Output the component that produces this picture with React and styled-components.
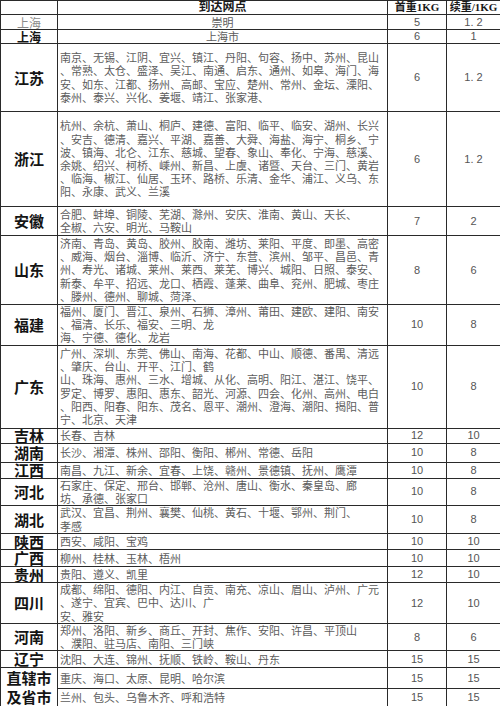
import React from 'react';
import styled, { createGlobalStyle } from 'styled-components';

const GlobalStyle = createGlobalStyle`
  html, body {
    margin: 0;
    padding: 0;
    background: #ffffff;
  }
  body {
    font-family: "Liberation Serif", "Noto Sans CJK SC", serif;
  }
`;

const Sheet = styled.table`
  width: 500px;
  table-layout: fixed;
  border-collapse: collapse;
  border-bottom: 2px solid #111;
`;

const Row = styled.tr`
  height: ${(p) => p.$h}px;
`;

const Cell = styled.td`
  border: 1px solid #2a2a2a;
  padding: 0;
  vertical-align: middle;
  overflow: hidden;
`;

const HeadCell = styled(Cell)`
  text-align: center;
  font-family: "Liberation Serif", "Noto Sans CJK SC", serif;
  font-weight: 700;
  font-size: ${(p) => p.$size || 11}px;
  line-height: 11px;
  color: #1a1a1a;
`;

const ProvinceCell = styled(Cell)`
  text-align: center;
  font-family: "Noto Sans CJK SC", sans-serif;
  font-weight: ${(p) => (p.$muted ? 400 : 700)};
  font-size: ${(p) => p.$size || 15}px;
  line-height: ${(p) => p.$lh || 12}px;
  color: ${(p) => (p.$muted ? '#8a8a8a' : '#141414')};
`;

const PlacesCell = styled(Cell)`
  padding: 0 2px;
  text-align: ${(p) => (p.$center ? 'center' : 'left')};
  font-family: "Noto Sans CJK SC", serif;
  font-size: 11px;
  line-height: ${(p) => p.$lh || 13.2}px;
  color: #5c5c5c;
`;

const Line = styled.div`
  white-space: nowrap;
`;

const PriceCell = styled(Cell)`
  text-align: center;
  font-family: "Liberation Sans", "Noto Sans CJK SC", sans-serif;
  font-size: 11px;
  line-height: 11px;
  color: #555;
`;

const rows = [
  {
    name: '江苏', h: 68, first: '6', next: '1. 2',
    lines: [
      '南京、无锡、江阴、宜兴、镇江、丹阳、句容、扬中、苏州、昆山',
      '、常熟、太仓、盛泽、吴江、南通、启东、通州、如皋、海门、海',
      '安、如东、江都、扬州、高邮、宝应、楚州、常州、金坛、溧阳、',
      '泰州、泰兴、兴化、姜堰、靖江、张家港、',
    ],
  },
  {
    name: '浙江', h: 95, first: '6', next: '1. 2',
    lines: [
      '杭州、余杭、萧山、桐庐、建德、富阳、临平、临安、湖州、长兴',
      '、安吉、德清、嘉兴、平湖、嘉善、大舜、海盐、海宁、桐乡、宁',
      '波、镇海、北仑、江东、慈城、望春、象山、奉化、宁海、慈溪、',
      '余姚、绍兴、柯桥、嵊州、新昌、上虞、诸暨、天台、三门、黄岩',
      '、临海、椒江、仙居、玉环、路桥、乐清、金华、浦江、义乌、东',
      '阳、永康、武义、兰溪',
    ],
  },
  {
    name: '安徽', h: 29, first: '7', next: '2',
    lines: [
      '合肥、蚌埠、铜陵、芜湖、滁州、安庆、淮南、黄山、天长、',
      '全椒、六安、明光、马鞍山',
    ],
  },
  {
    name: '山东', h: 69, first: '8', next: '6',
    lines: [
      '济南、青岛、黄岛、胶州、胶南、潍坊、莱阳、平度、即墨、高密',
      '、威海、烟台、淄博、临沂、济宁、东营、滨州、邹平、昌邑、青',
      '州、寿光、诸城、莱州、莱西、莱芜、博兴、城阳、日照、泰安、',
      '新泰、牟平、招远、龙口、栖霞、蓬莱、曲阜、兖州、肥城、枣庄',
      '、滕州、德州、聊城、菏泽、',
    ],
  },
  {
    name: '福建', h: 40, first: '10', next: '8',
    lines: [
      '福州、厦门、晋江、泉州、石狮、漳州、莆田、建欧、建阳、南安',
      '、福清、长乐、福安、三明、龙',
      '海、宁德、德化、龙岩',
    ],
  },
  {
    name: '广东', h: 83, first: '10', next: '8',
    lines: [
      '广州、深圳、东莞、佛山、南海、花都、中山、顺德、番禺、清远',
      '、肇庆、台山、开平、江门、鹤',
      '山、珠海、惠州、三水、增城、从化、高明、阳江、湛江、饶平、',
      '罗定、博罗、惠阳、惠东、韶光、河源、四会、化州、高州、电白',
      '、阳西、阳春、阳东、茂名、恩平、潮州、澄海、潮阳、揭阳、普',
      '宁、北京、天津',
    ],
  },
  { name: '吉林', h: 15, first: '12', next: '10', lines: ['长春、吉林'] },
  { name: '湖南', h: 19, first: '10', next: '8', lines: ['长沙、湘潭、株州、邵阳、衡阳、郴州、常德、岳阳'] },
  { name: '江西', h: 16, first: '10', next: '8', lines: ['南昌、九江、新余、宜春、上饶、赣州、景德镇、抚州、鹰潭'] },
  {
    name: '河北', h: 27, first: '10', next: '8',
    lines: ['石家庄、保定、邢台、邯郸、沧州、唐山、衡水、秦皇岛、廊', '坊、承德、张家口'],
  },
  {
    name: '湖北', h: 28, first: '10', next: '8',
    lines: ['武汉、宜昌、荆州、襄樊、仙桃、黄石、十堰、鄂州、荆门、', '孝感'],
  },
  { name: '陕西', h: 16, first: '10', next: '10', lines: ['西安、咸阳、宝鸡'] },
  { name: '广西', h: 17, first: '10', next: '10', lines: ['柳州、桂林、玉林、梧州'] },
  { name: '贵州', h: 16, first: '12', next: '10', lines: ['贵阳、遵义、凯里'] },
  {
    name: '四川', h: 41, first: '12', next: '10',
    lines: [
      '成都、绵阳、德阳、内江、自贡、南充、凉山、眉山、泸州、广元',
      '、遂宁、宜宾、巴中、达川、广',
      '安、雅安',
    ],
  },
  {
    name: '河南', h: 27, first: '8', next: '6',
    lines: ['郑州、洛阳、新乡、商丘、开封、焦作、安阳、许昌、平顶山', '、濮阳、驻马店、南阳、三门峡'],
  },
  { name: '辽宁', h: 17, first: '15', next: '15', lines: ['沈阳、大连、锦州、抚顺、铁岭、鞍山、丹东'] },
];

const cities = [
  { h: 20, first: '15', next: '15', lines: ['重庆、海口、太原、昆明、哈尔滨'] },
  { h: 18, first: '15', next: '15', lines: ['兰州、包头、乌鲁木齐、呼和浩特'] },
];

const Places = ({ lines }) => (
  <PlacesCell $lh={lines.length === 1 ? 11 : 13.2}>
    {lines.map((line, i) => (
      <Line key={i}>{line}</Line>
    ))}
  </PlacesCell>
);

const App = () => {
  return (
    <>
      <GlobalStyle />
      <Sheet>
        <colgroup>
          <col style={{ width: 57 }} />
          <col style={{ width: 330 }} />
          <col style={{ width: 59 }} />
          <col style={{ width: 54 }} />
        </colgroup>
        <tbody>
          <Row $h={14}>
            <HeadCell />
            <HeadCell $size={12}>到达网点</HeadCell>
            <HeadCell>首重1KG</HeadCell>
            <HeadCell>续重/1KG</HeadCell>
          </Row>
          <Row $h={15}>
            <ProvinceCell $muted $size={12} $lh={11}>上海</ProvinceCell>
            <PlacesCell $center $lh={11}>崇明</PlacesCell>
            <PriceCell>5</PriceCell>
            <PriceCell>1. 2</PriceCell>
          </Row>
          <Row $h={14}>
            <ProvinceCell $size={12} $lh={11}>上海</ProvinceCell>
            <PlacesCell $center $lh={11}>上海市</PlacesCell>
            <PriceCell>6</PriceCell>
            <PriceCell>1</PriceCell>
          </Row>
          {rows.map((row) => (
            <Row key={row.name} $h={row.h}>
              <ProvinceCell>{row.name}</ProvinceCell>
              <Places lines={row.lines} />
              <PriceCell>{row.first}</PriceCell>
              <PriceCell>{row.next}</PriceCell>
            </Row>
          ))}
          {cities.map((row, i) => (
            <Row key={i} $h={row.h}>
              {i === 0 && (
                <ProvinceCell rowSpan={2} $lh={19}>
                  直辖市
                  <br />
                  及省市
                </ProvinceCell>
              )}
              <Places lines={row.lines} />
              <PriceCell>{row.first}</PriceCell>
              <PriceCell>{row.next}</PriceCell>
            </Row>
          ))}
        </tbody>
      </Sheet>
    </>
  );
};

export default App;
